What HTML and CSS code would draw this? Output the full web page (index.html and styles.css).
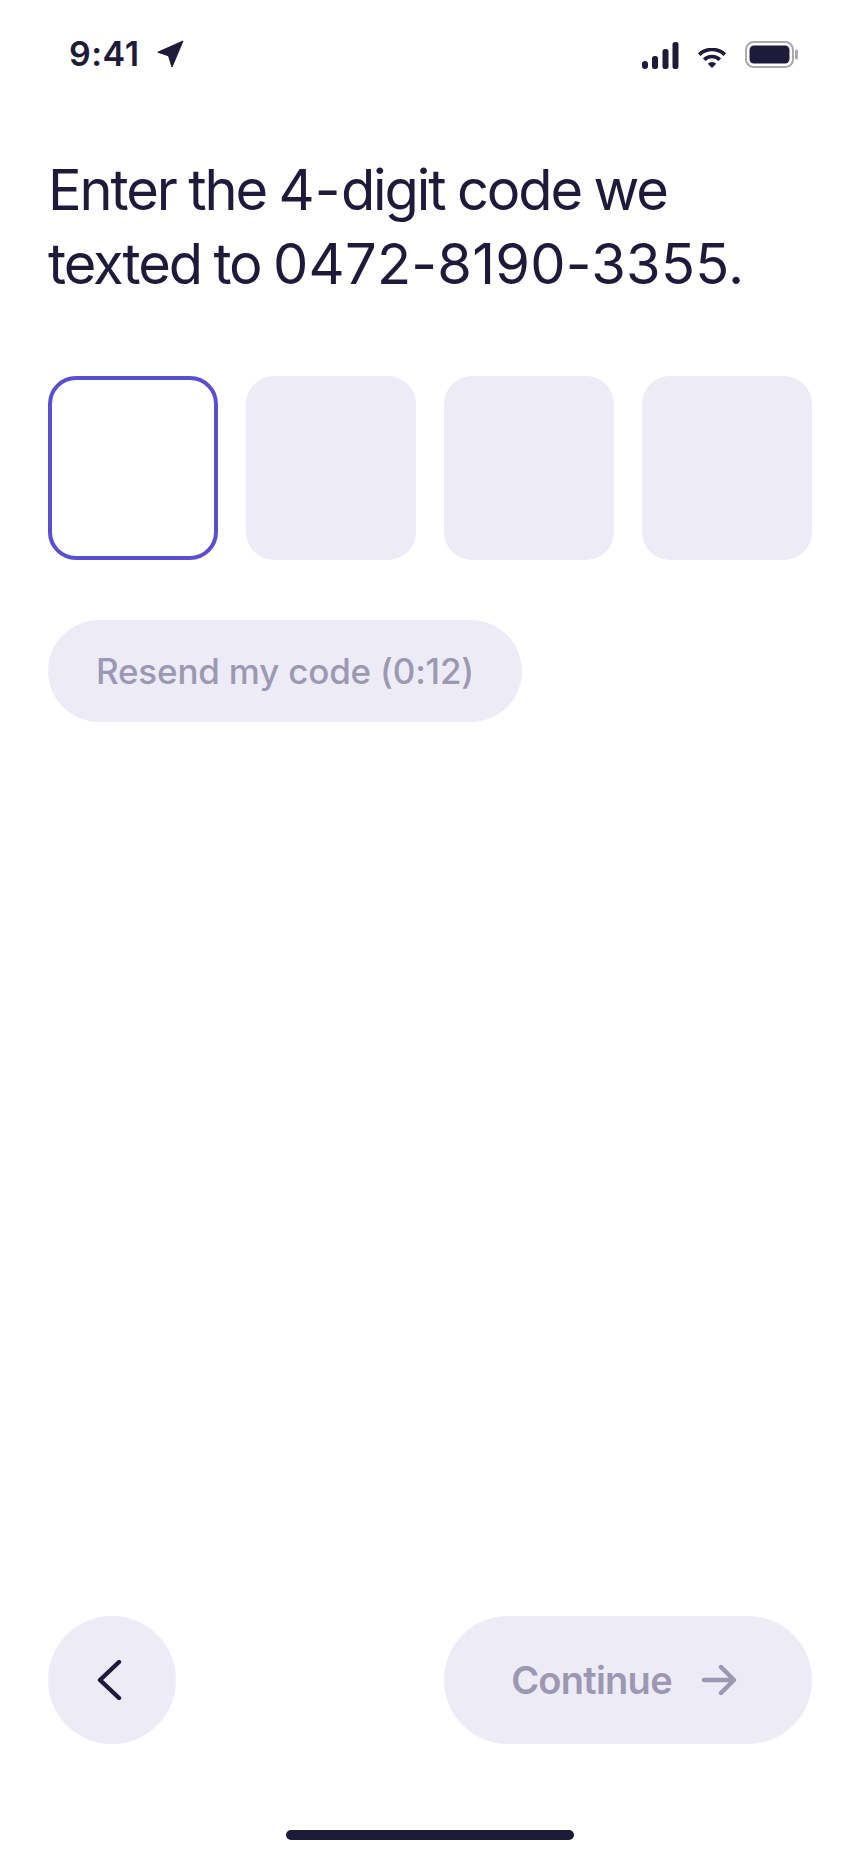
FILE: index.html
```html
<!DOCTYPE html>
<html lang="en">
<head>
<meta charset="utf-8">
<title>Enter code</title>
<link rel="stylesheet" href="styles.css">
</head>
<body>
<main class="screen">
  <header class="status">
    <div class="status-left">
      <span class="time">9:41</span>
      <svg class="loc" width="28" height="28" viewBox="0 0 28 28"><path d="M.8 12.200 26 1 15 27l-3.500-11.200z" fill="#1e1a3a" stroke="#1e1a3a" stroke-width="1" stroke-linejoin="round"/></svg>
    </div>
    <div class="status-right">
      <svg class="signal" width="37" height="27" viewBox="0 0 37 27"><g fill="#1e1a3a"><rect x="0" y="19" width="6" height="8" rx="3"/><rect x="10" y="14" width="6" height="13" rx="2.500"/><rect x="20.500" y="7" width="6" height="20" rx="2.500"/><rect x="30.500" y="0" width="6" height="27" rx="2.500"/></g></svg>
      <svg class="wifi" width="28" height="20" viewBox="0 0 28 20"><g fill="none" stroke="#1e1a3a" stroke-width="3.600"><path d="M1.200 6.600a18.500 18.500 0 0 1 25.600 0"/><path d="M6.200 11.800a11 11 0 0 1 15.600 0"/></g><path d="M14 20 9.800 15.800a6 6 0 0 1 8.400 0z" fill="#1e1a3a"/></svg>
      <svg class="batt" width="53" height="27" viewBox="0 0 53 27"><rect x="1" y="1" width="47" height="25" rx="7.500" fill="none" stroke="#a9a9ae" stroke-width="2"/><rect x="4.500" y="4.500" width="40" height="18" rx="4.500" fill="#1e1a3a"/><rect x="50" y="8.500" width="3" height="10" rx="1.500" fill="#a9a9ae"/></svg>
    </div>
  </header>

  <h1 class="title">Enter the <span class="num">4-</span>digit code we<br>texted to <span class="num">0472-8190-3355.</span></h1>

  <div class="code">
    <div class="cell cell-active"></div>
    <div class="cell"></div>
    <div class="cell"></div>
    <div class="cell"></div>
  </div>

  <button class="resend" type="button">Resend my code (0:12)</button>

  <nav class="actions">
    <button class="back" type="button" aria-label="Back">
      <svg class="chev" width="26" height="44" viewBox="0 0 26 44"><path d="M23 4 4 22l19 18" fill="none" stroke="#1e1a3a" stroke-width="4.400" stroke-linecap="round" stroke-linejoin="round"/></svg>
    </button>
    <button class="continue" type="button">
      <span>Continue</span>
      <svg width="36" height="32" viewBox="0 0 36 32"><path d="M3 16h30M20 3l13 13-13 13" fill="none" stroke="#9c98b3" stroke-width="4.400" stroke-linecap="round" stroke-linejoin="round"/></svg>
    </button>
  </nav>

  <div class="home-wrap"><div class="home"></div></div>
</main>
</body>
</html>
```
FILE: styles.css
```css
* { box-sizing: border-box; }
html, body { margin: 0; padding: 0; background: #fff; }
body { font-family: Inter, "Liberation Sans", sans-serif; color: #1e1a3a; }
.screen { width: 860px; height: 1864px; padding: 0 48px; display: flex; flex-direction: column; }
.status { height: 108px; padding: 0 14px 0 21px; display: flex; justify-content: space-between; align-items: center; }
.status-left { display: flex; align-items: center; gap: 17px; }
.time { font-size: 34px; font-weight: 600; letter-spacing: 0.5px; line-height: 40px; }
.status-right { display: flex; align-items: center; gap: 19px; }
.signal { margin-top: 2px; }
.wifi { margin-top: 8px; }
.title { margin: 45px 0 0; font-size: 56px; font-weight: 400; line-height: 74px; letter-spacing: -2.1px; word-spacing: -1.2px; white-space: nowrap; }
.num { letter-spacing: 0.25px; }
.code { margin-top: 75px; display: grid; grid-template-columns: repeat(4, 170px); gap: 28px; }
.cell { height: 184px; border-radius: 28px; background: #edecf6; }
.cell-active { background: #fff; border: 4px solid #5b4fd1; }
button { border: 0; font-family: inherit; padding: 0; }
.resend { margin-top: 60px; align-self: flex-start; width: 474px; height: 102px; border-radius: 51px; background: #edecf6; color: #9c98b3; font-size: 35px; font-weight: 450; letter-spacing: -0.2px; }
.actions { margin-top: auto; display: flex; justify-content: space-between; }
.back { width: 128px; height: 128px; border-radius: 50%; background: #edecf6; display: flex; align-items: center; justify-content: center; }
.chev { margin-right: 6px; }
.continue { width: 368px; height: 128px; padding-right: 8px; border-radius: 64px; background: #edecf6; color: #9c98b3; font-size: 38px; font-weight: 600; letter-spacing: -0.75px; display: flex; align-items: center; justify-content: center; gap: 29px; }
.home-wrap { height: 120px; padding-top: 86px; display: flex; justify-content: center; }
.home { width: 288px; height: 10px; border-radius: 5px; background: #1e1a3a; }
```
